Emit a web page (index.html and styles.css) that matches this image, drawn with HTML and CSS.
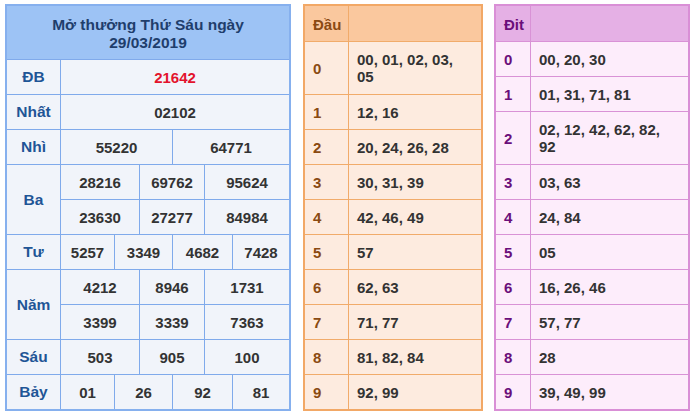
FILE: index.html
```html
<!DOCTYPE html>
<html lang="vi">
<head>
<meta charset="utf-8">
<title>Kết quả xổ số</title>
<link rel="stylesheet" href="styles.css">
</head>
<body>
<div class="page">
  <div class="kq">
    <div class="kq-head">Mở thưởng Thứ Sáu ngày<br>29/03/2019</div>

    <div class="lbl">ĐB</div>
    <div class="c s2-7 red">21642</div>

    <div class="lbl">Nhất</div>
    <div class="c s2-7">02102</div>

    <div class="lbl">Nhì</div>
    <div class="c s2-4">55220</div>
    <div class="c s5-7">64771</div>

    <div class="lbl r2">Ba</div>
    <div class="c s2-3">28216</div>
    <div class="c s4-5">69762</div>
    <div class="c s6-7">95624</div>
    <div class="c s2-3">23630</div>
    <div class="c s4-5">27277</div>
    <div class="c s6-7">84984</div>

    <div class="lbl">Tư</div>
    <div class="c s2">5257</div>
    <div class="c s3-4">3349</div>
    <div class="c s5-6">4682</div>
    <div class="c s7">7428</div>

    <div class="lbl r2">Năm</div>
    <div class="c s2-3">4212</div>
    <div class="c s4-5">8946</div>
    <div class="c s6-7">1731</div>
    <div class="c s2-3">3399</div>
    <div class="c s4-5">3339</div>
    <div class="c s6-7">7363</div>

    <div class="lbl">Sáu</div>
    <div class="c s2-3">503</div>
    <div class="c s4-5">905</div>
    <div class="c s6-7">100</div>

    <div class="lbl">Bảy</div>
    <div class="c s2">01</div>
    <div class="c s3-4">26</div>
    <div class="c s5-6">92</div>
    <div class="c s7">81</div>
  </div>

  <div class="lt dau">
    <div class="h k">Đầu</div><div class="h"></div>
    <div class="k">0</div><div class="v">00, 01, 02, 03,<br>05</div>
    <div class="k">1</div><div class="v">12, 16</div>
    <div class="k">2</div><div class="v">20, 24, 26, 28</div>
    <div class="k">3</div><div class="v">30, 31, 39</div>
    <div class="k">4</div><div class="v">42, 46, 49</div>
    <div class="k">5</div><div class="v">57</div>
    <div class="k">6</div><div class="v">62, 63</div>
    <div class="k">7</div><div class="v">71, 77</div>
    <div class="k">8</div><div class="v">81, 82, 84</div>
    <div class="k">9</div><div class="v">92, 99</div>
  </div>

  <div class="lt dit">
    <div class="h k">Đit</div><div class="h"></div>
    <div class="k">0</div><div class="v">00, 20, 30</div>
    <div class="k">1</div><div class="v">01, 31, 71, 81</div>
    <div class="k">2</div><div class="v">02, 12, 42, 62, 82,<br>92</div>
    <div class="k">3</div><div class="v">03, 63</div>
    <div class="k">4</div><div class="v">24, 84</div>
    <div class="k">5</div><div class="v">05</div>
    <div class="k">6</div><div class="v">16, 26, 46</div>
    <div class="k">7</div><div class="v">57, 77</div>
    <div class="k">8</div><div class="v">28</div>
    <div class="k">9</div><div class="v">39, 49, 99</div>
  </div>
</div>
</body>
</html>
```

FILE: styles.css
```css
* { box-sizing: border-box; }
html, body { margin: 0; padding: 0; background: #ffffff; }
body {
  font-family: "Liberation Sans", Arial, sans-serif;
  font-weight: bold;
  font-size: 15px;
  color: #333333;
}
.page {
  display: flex;
  align-items: flex-start;
  padding: 4px 0 0 5px;
}

/* left results table */
.kq {
  width: 286px;
  display: grid;
  grid-template-columns: 53px 53px 24px 32px 31px 27px 56px;
  grid-template-rows: 53px repeat(10, 34px);
  gap: 1px;
  background: #80aaeb;
  border: 2px solid #86b0ee;
}
.kq > div {
  background: #f1f4fa;
  display: flex;
  align-items: center;
  justify-content: center;
}
.kq-head {
  grid-column: 1 / 8;
  background: #9dc3f5 !important;
  color: #1f3e6c;
  text-align: center;
  font-size: 15.5px;
  line-height: 18px;
  padding-top: 3px;
}
.lbl { grid-column: 1; color: #1f5596; font-size: 15.5px; }
.lbl.r2 { grid-row: span 2; }
.s2-7 { grid-column: 2 / 8; }
.s2-4 { grid-column: 2 / 5; }
.s5-7 { grid-column: 5 / 8; }
.s2-3 { grid-column: 2 / 4; }
.s4-5 { grid-column: 4 / 6; }
.s6-7 { grid-column: 6 / 8; }
.s2 { grid-column: 2; }
.s3-4 { grid-column: 3 / 5; }
.s5-6 { grid-column: 5 / 7; }
.s7 { grid-column: 7; }
.red { color: #e3132c; }

/* loto head / tail tables */
.lt {
  display: grid;
  gap: 1px;
  border: 2px solid;
}
.lt > div {
  display: flex;
  align-items: center;
  padding-left: 8px;
  line-height: 17px;
}
.lt .h { padding-top: 1px; }

.dau {
  margin-left: 12px;
  width: 180px;
  grid-template-columns: 43px 132px;
  grid-template-rows: 35px 52px repeat(9, 34px);
  background: #f1ab6a;
  border-color: #f2a866;
}
.dau > div { background: #fdebdf; }
.dau .h { background: #fac89e; color: #5c2a0a; }
.dau .k { color: #8a4a12; }

.dit {
  margin-left: 11px;
  width: 196px;
  grid-template-columns: 34px 157px;
  grid-template-rows: 35px 34px 34px 52px repeat(7, 34px);
  background: #d992d6;
  border-color: #d98fd6;
}
.dit > div { background: #fdedfb; }
.dit .h { background: #e5b0e5; color: #4b1545; }
.dit .k { color: #6a0e7a; }
```
